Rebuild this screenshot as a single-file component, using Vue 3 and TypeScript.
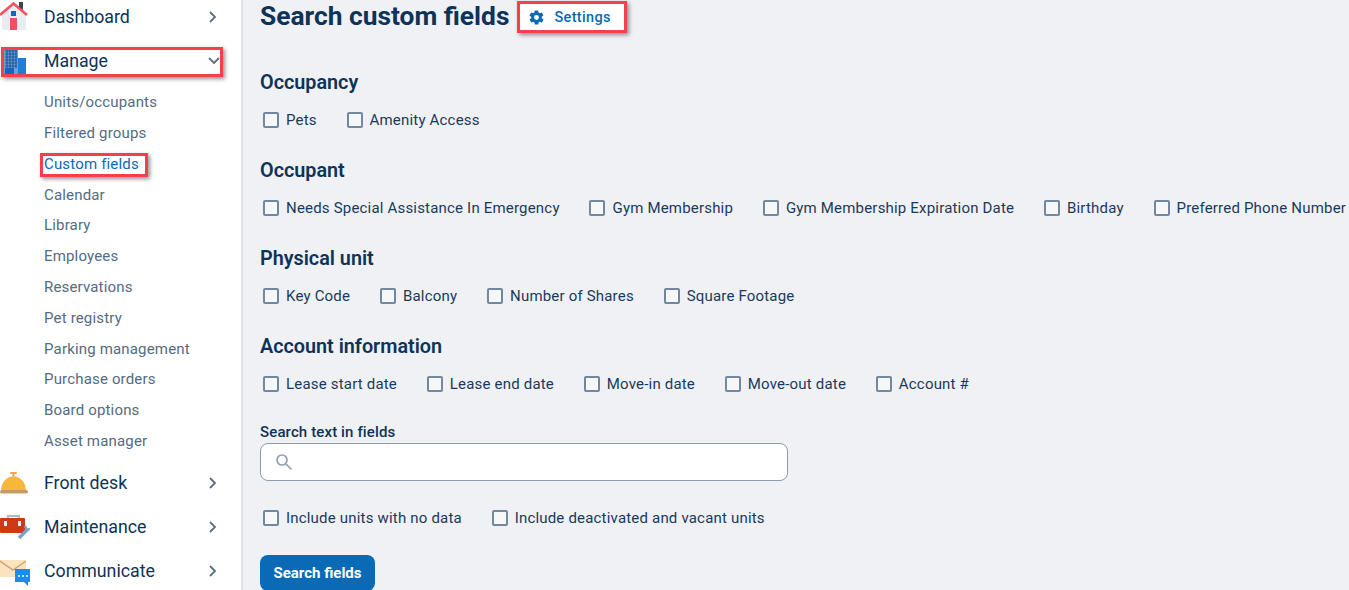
<script setup lang="ts">
const subItems: string[] = [
  'Units/occupants', 'Filtered groups', 'Custom fields', 'Calendar', 'Library', 'Employees',
  'Reservations', 'Pet registry', 'Parking management', 'Purchase orders', 'Board options', 'Asset manager',
]
const groups: { title: string; fields: string[] }[] = [
  { title: 'Occupancy', fields: ['Pets', 'Amenity Access'] },
  { title: 'Occupant', fields: ['Needs Special Assistance In Emergency', 'Gym Membership', 'Gym Membership Expiration Date', 'Birthday', 'Preferred Phone Number'] },
  { title: 'Physical unit', fields: ['Key Code', 'Balcony', 'Number of Shares', 'Square Footage'] },
  { title: 'Account information', fields: ['Lease start date', 'Lease end date', 'Move-in date', 'Move-out date', 'Account #'] },
]
</script>

<template>
  <div class="page">
    <aside class="sidebar">
      <div class="nav-row first">
        <svg class="nav-icon" viewBox="0 0 30 30">
          <rect x="19" y="0" width="4" height="8" fill="#37474f" />
          <path d="M2 12 13.5 2 26 12v16H2z" fill="#e9edf0" />
          <rect x="11" y="9" width="5" height="5" fill="#1565c0" />
          <rect x="10" y="16" width="7" height="12" fill="#ef5061" />
          <path d="M0 13 13.5 1.5 27 13" fill="none" stroke="#f4525c" stroke-width="2.6" />
        </svg>
        <span class="nav-label">Dashboard</span>
        <svg class="chev" viewBox="0 0 10 14"><path d="M2 2l5 5-5 5" /></svg>
      </div>
      <div class="nav-row manage">
        <svg class="nav-icon" viewBox="0 0 30 30">
          <rect x="4" y="3" width="14" height="25" fill="#6f9fd0" />
          <path d="M5 5h12M5 8h12M5 11h12M5 14h12M5 17h12M5 20h12M7 4v18M10 4v18M13 4v18M16 4v18" stroke="#1c5a9c" stroke-width="1.2" />
          <rect x="5" y="22" width="9" height="6" fill="#1565c0" />
          <rect x="18" y="12" width="8" height="16" fill="#1a80dc" />
        </svg>
        <span class="nav-label">Manage</span>
        <svg class="chev down" viewBox="0 0 14 10"><path d="M2 2l5 5 5-5" /></svg>
        <i class="mark"></i>
      </div>
      <ul class="subnav">
        <li v-for="item in subItems" :key="item" :class="{ active: item === 'Custom fields' }">
          <span class="sub-label">{{ item }}<i v-if="item === 'Custom fields'" class="mark"></i></span>
        </li>
      </ul>
      <div class="nav-row">
        <svg class="nav-icon" viewBox="0 0 30 30">
          <rect x="10" y="4" width="7" height="2" rx="1" fill="#f2a93b" />
          <rect x="12.5" y="5" width="2" height="4" fill="#f2a93b" />
          <path d="M1 22C2 13 7 8.500 13.500 8.500S25 13 26 22z" fill="#f6b73c" />
          <rect x="0" y="22" width="28" height="3.500" rx="1.700" fill="#c49a6c" />
        </svg>
        <span class="nav-label">Front desk</span>
        <svg class="chev" viewBox="0 0 10 14"><path d="M2 2l5 5-5 5" /></svg>
      </div>
      <div class="nav-row">
        <svg class="nav-icon" viewBox="0 0 30 30">
          <path d="M8 7V4h11v3" fill="none" stroke="#a9bdd0" stroke-width="2" />
          <rect x="0" y="6" width="25" height="15" rx="1" fill="#d03a12" />
          <rect x="4" y="9" width="3" height="5" fill="#e8e8e8" />
          <rect x="18" y="9" width="3" height="5" fill="#e8e8e8" />
          <path d="M19 26l8-8" stroke="#7ba3c7" stroke-width="3.400" />
          <path d="M25 14l2 4 3-1" fill="none" stroke="#7ba3c7" stroke-width="2.400" />
        </svg>
        <span class="nav-label">Maintenance</span>
        <svg class="chev" viewBox="0 0 10 14"><path d="M2 2l5 5-5 5" /></svg>
      </div>
      <div class="nav-row">
        <svg class="nav-icon" viewBox="0 0 30 30">
          <rect x="0" y="4" width="26" height="17" fill="#fbe3bd" />
          <path d="M0 5l13 9L26 5" fill="none" stroke="#c9a77d" stroke-width="1.500" />
          <path d="M15 13h15v13h-2v4l-4-4h-9z" fill="#1a8cf0" />
          <circle cx="19" cy="20" r="1" fill="#fff" />
          <circle cx="23" cy="20" r="1" fill="#fff" />
          <circle cx="27" cy="20" r="1" fill="#fff" />
        </svg>
        <span class="nav-label">Communicate</span>
        <svg class="chev" viewBox="0 0 10 14"><path d="M2 2l5 5-5 5" /></svg>
      </div>
    </aside>

    <main class="content">
      <header class="title-row">
        <h1>Search custom fields</h1>
        <button class="settings" type="button">
          <svg class="gear" viewBox="0 0 24 24"><path d="M19.4 13a7.6 7.6 0 0 0 0-2l2.1-1.6a.5.5 0 0 0 .1-.6l-2-3.5a.5.5 0 0 0-.6-.2l-2.5 1a7.4 7.4 0 0 0-1.7-1l-.4-2.7a.5.5 0 0 0-.5-.4h-4a.5.5 0 0 0-.5.4l-.4 2.7a7.4 7.4 0 0 0-1.7 1l-2.5-1a.5.5 0 0 0-.6.2l-2 3.5a.5.5 0 0 0 .1.6L4.6 11a7.6 7.6 0 0 0 0 2l-2.1 1.6a.5.5 0 0 0-.1.6l2 3.5c.1.2.4.3.6.2l2.5-1c.5.4 1.1.7 1.7 1l.4 2.7c0 .2.3.4.5.4h4c.2 0 .5-.2.5-.4l.4-2.7c.6-.3 1.2-.6 1.7-1l2.5 1c.2.1.5 0 .6-.2l2-3.5a.5.5 0 0 0-.1-.6zM12 15.5a3.5 3.5 0 1 1 0-7 3.5 3.5 0 0 1 0 7z" /></svg>
          <span>Settings</span>
          <i class="mark"></i>
        </button>
      </header>

      <section v-for="group in groups" :key="group.title" class="group">
        <h2>{{ group.title }}</h2>
        <div class="fields">
          <label v-for="field in group.fields" :key="field" class="check">
            <span class="box"></span>{{ field }}
          </label>
        </div>
      </section>

      <label class="search-label" for="search-text">Search text in fields</label>
      <div class="search-box">
        <svg class="search-icon" viewBox="0 0 18 18"><circle cx="7" cy="7" r="5" /><path d="M11 11l5.500 5.500" /></svg>
        <input id="search-text" type="text" />
      </div>

      <div class="fields options">
        <label class="check"><span class="box"></span>Include units with no data</label>
        <label class="check"><span class="box"></span>Include deactivated and vacant units</label>
      </div>

      <button class="primary" type="button">Search fields</button>
    </main>
  </div>
</template>

<style scoped>
.page {
  display: flex;
  height: 590px;
  overflow: hidden;
  background: #eff1f5;
  font-family: Roboto, "Liberation Sans", sans-serif;
  color: #0f2f50;
}
.sidebar {
  flex: 0 0 243px;
  box-sizing: border-box;
  background: #fff;
  border-right: 2px solid #dfe3e9;
}
.nav-row {
  position: relative;
  display: flex;
  align-items: center;
  height: 44px;
  padding-right: 23px;
}
.nav-row.first {
  margin-top: -5px;
}
.nav-icon {
  flex: 0 0 30px;
  width: 30px;
  height: 30px;
  margin-right: 14px;
}
.nav-label {
  flex: 1;
  font-size: 17.75px;
  color: #0d3358;
}
.chev {
  width: 10px;
  height: 14px;
  fill: none;
  stroke: #5c6f82;
  stroke-width: 1.8;
}
.chev.down {
  width: 14px;
  height: 10px;
  margin-right: -3px;
}
.mark {
  position: absolute;
  box-sizing: border-box;
  border: 3px solid #f2414a;
  box-shadow: 2px 2px 4px rgba(60, 60, 60, 0.55);
  pointer-events: none;
}
.manage .mark {
  left: 1px;
  top: 8px;
  width: 222px;
  height: 30px;
}
.subnav {
  list-style: none;
  margin: 0;
  padding: 4.3px 0 3.9px 44px;
}
.subnav li {
  height: 30.8px;
  line-height: 30.8px;
  font-size: 15px;
  letter-spacing: 0.17px;
  color: #546b82;
}
.sub-label {
  position: relative;
  display: inline-block;
}
.subnav li.active {
  color: #0a6ab5;
}
.sub-label .mark {
  left: -4px;
  top: 4px;
  width: 108px;
  height: 24px;
}
.content {
  flex: 1;
  min-width: 0;
  padding-left: 17px;
  white-space: nowrap;
}
.title-row {
  display: flex;
  align-items: center;
  height: 32px;
  margin-top: 1px;
}
h1 {
  margin: -2px 0 0;
  font-size: 26.35px;
  font-weight: 700;
  color: #0d3358;
}
.settings {
  position: relative;
  display: flex;
  align-items: center;
  box-sizing: border-box;
  width: 110px;
  height: 32px;
  margin-left: 8px;
  padding: 0 0 0 11px;
  border: 0;
  background: #fff;
  color: #0a6ab5;
  font: 500 14.5px Roboto, sans-serif;
  letter-spacing: 0.35px;
}
.gear {
  width: 17px;
  height: 17px;
  margin-right: 9px;
  fill: #0a6ab5;
}
.settings .mark {
  left: 0;
  top: 0;
  width: 110px;
  height: 32px;
}
.group {
  padding-top: 26px;
  height: 62px;
}
.group:first-of-type {
  padding-top: 35px;
}
h2 {
  margin: 0;
  padding-top: 1px;
  font-size: 19.8px;
  line-height: 27px;
  font-weight: 600;
  color: #0d3358;
}
.fields {
  display: flex;
  gap: 26.8px;
  margin-top: 13px;
}
.check {
  display: flex;
  align-items: center;
  height: 22px;
  font-size: 15px;
  letter-spacing: 0.19px;
  color: #1a3a5c;
}
.box {
  box-sizing: border-box;
  width: 16px;
  height: 16px;
  margin: 0 7px 0 3px;
  border: 2px solid #7288a0;
  border-radius: 2px;
  background: #f6f7f9;
}
.search-label {
  display: block;
  margin-top: 29px;
  font-size: 15px;
  font-weight: 500;
  letter-spacing: 0.13px;
  line-height: 18px;
  color: #0d3358;
}
.search-box {
  display: flex;
  align-items: center;
  box-sizing: border-box;
  width: 528px;
  height: 38px;
  margin-top: 2px;
  padding-left: 14px;
  border: 1px solid #8c9cb0;
  border-radius: 8px;
  background: #fff;
}
.search-icon {
  width: 18px;
  height: 18px;
  fill: none;
  stroke: #8fa0b2;
  stroke-width: 1.7;
}
.search-box input {
  flex: 1;
  min-width: 0;
  border: 0;
  outline: 0;
  background: transparent;
}
.options {
  margin-top: 26px;
}
.primary {
  display: block;
  width: 115px;
  height: 36px;
  margin-top: 26px;
  padding: 0;
  border: 0;
  border-radius: 8px;
  background: #0a6ab5;
  color: #fff;
  font: 700 15px Roboto, sans-serif;
}
</style>
